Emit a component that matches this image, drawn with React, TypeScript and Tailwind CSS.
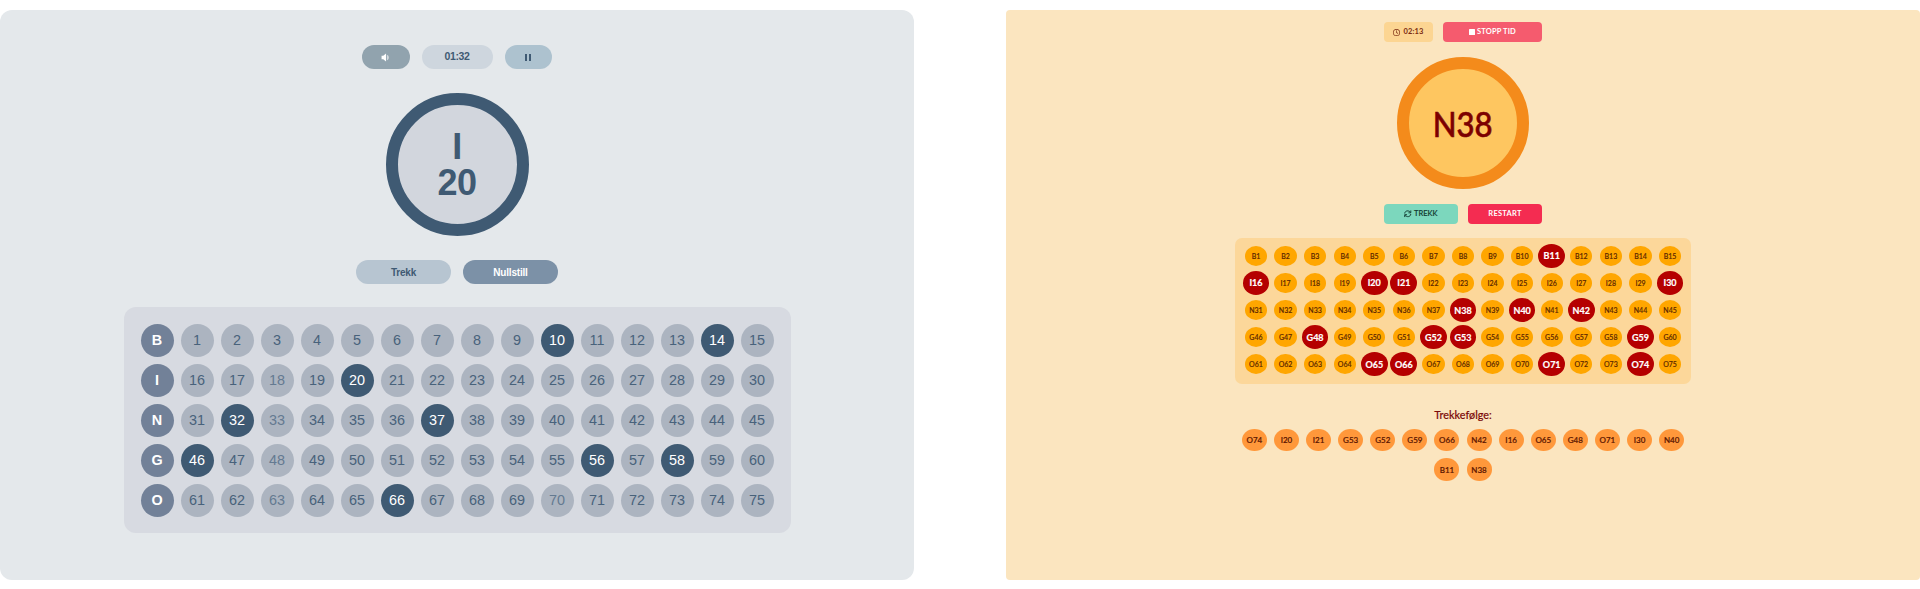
import { FaRegClock } from "react-icons/fa6";

const LETTERS = ["B", "I", "N", "G", "O"];
const COLS = Array.from({ length: 15 }, (_, i) => i);

const SLATE_DRAWN = [10, 14, 20, 32, 37, 46, 56, 58, 66];
const SLATE_FAINT = [18, 33, 48, 63, 70];

const ORDER = ["O74", "I20", "I21", "G53", "G52", "G59", "O66", "N42", "I16", "O65", "G48", "O71", "I30", "N40", "B11", "N38"];

function slateBall(n: number) {
  if (SLATE_DRAWN.includes(n)) return "bg-[#3f5a73] text-white";
  if (SLATE_FAINT.includes(n)) return "bg-[#acb4c0] text-[#647a91]";
  return "bg-[#acb4c0] text-[#48627b]";
}

function SpeakerIcon() {
  return (
    <svg viewBox="0 0 16 16" className="size-[9px]" fill="none">
      <path d="M1 5h3l5-4v14l-5-4H1z" fill="#fff" />
      <path d="M10.500 3c4.500 1.500 4.500 8.500 0 10z" fill="#fff" fillOpacity="0.6" />
    </svg>
  );
}

function RefreshIcon() {
  return (
    <svg viewBox="0 0 16 16" className="size-[7.500px]" fill="none" stroke="currentColor" strokeWidth="2">
      <path d="M1.500 7.500C2 1 10 0 14 5M14.500 8.500C14 15 6 16 2 11" />
      <path d="M14.500 1v5h-5M1.500 15v-5h5" />
    </svg>
  );
}

function SlatePanel() {
  return (
    <section className="flex h-[570px] w-[914px] flex-col items-center rounded-[12px] bg-[#e4e8eb] pt-[35px] font-['Liberation_Sans',sans-serif] text-[#3f5a73]">
      <div className="flex h-6 gap-3 text-[10.500px] font-bold">
        <button className="flex w-[47.500px] items-center justify-center rounded-full bg-[#91a3ae]"><SpeakerIcon /></button>
        <div className="flex w-[71px] items-center justify-center rounded-full bg-[#ced6de] tracking-[-0.400px]">01:32</div>
        <button className="flex w-[47.500px] items-center justify-center gap-[2px] rounded-full bg-[#adc2cf]">
          <span className="h-[7px] w-[2px] bg-[#3f5a73]" />
          <span className="h-[7px] w-[2px] bg-[#3f5a73]" />
        </button>
      </div>
      <div className="mt-[23.500px] flex size-[143px] items-center justify-center rounded-full border-[12px] border-[#3f5a73] bg-[#d2d6dd] text-center text-[36px] leading-[36px] font-bold">
        <p className="pt-px tracking-[-0.500px]">I<br />20</p>
      </div>
      <div className="mt-[24.500px] flex h-6 gap-3 text-[10px] font-bold tracking-[-0.200px]">
        <button className="w-[95px] rounded-full bg-[#b7c5d1]">Trekk</button>
        <button className="w-[95px] rounded-full bg-[#7c91a7] text-white">Nullstill</button>
      </div>
      <div className="mt-[23px] flex w-[667px] flex-col gap-[7px] rounded-[12px] bg-[#d7dae1] p-[17px] pb-4">
        {LETTERS.map((l, r) => (
          <div key={l} className="flex gap-[7px] text-[14.400px]">
            <span className="flex size-[33px] items-center justify-center rounded-full bg-[#728198] font-bold text-white">{l}</span>
            {COLS.map((c) => (
              <span key={c} className={`flex size-[33px] items-center justify-center rounded-full ${slateBall(r * 15 + c + 1)}`}>{r * 15 + c + 1}</span>
            ))}
          </div>
        ))}
      </div>
    </section>
  );
}

function AmberPanel() {
  return (
    <section className="flex h-[570px] w-[914px] flex-col items-center rounded-[4px] bg-[#fbe5bf] pt-3 font-[Lato,sans-serif]">
      <div className="flex h-5 gap-[10px] text-[7.500px] font-bold">
        <div className="flex w-[49px] items-center justify-center gap-[3px] rounded-[4px] bg-[#fcd592] text-[#7a2a10]">
          <FaRegClock className="size-[7px]" />
          <span className="text-[7.500px] tracking-[0.150px]">02:13</span>
        </div>
        <button className="flex w-[99px] items-center justify-center gap-[2px] rounded-[4px] bg-[#f55b6e] text-white">
          <span className="size-[6px] rounded-[0.500px] bg-white" />
          <span className="tracking-[0.150px]">STOPP TID</span>
        </button>
      </div>
      <div className="mt-[14.500px] flex size-[132px] items-center justify-center rounded-full border-[12px] border-[#f48b1b] bg-[#fec660] text-[35px] font-medium text-[#7c0000]">
        <span className="scale-x-[0.890] pt-[2px] [-webkit-text-stroke:0.600px_#7c0000]">N38</span>
      </div>
      <div className="mt-[15.500px] flex h-5 gap-[10px] text-[7.500px]">
        <button className="flex w-[74px] items-center justify-center gap-[2px] rounded-[4px] bg-[#7cd7bd] font-medium text-[#103a30]">
          <RefreshIcon />
          <span className="[-webkit-text-stroke:0.150px_#103a30]">TREKK</span>
        </button>
        <button className="w-[74px] rounded-[4px] bg-[#f42c51] font-bold tracking-[0.250px] text-white">RESTART</button>
      </div>
      <div className="mt-[14px] flex h-[146px] w-[456px] flex-col justify-center rounded-[7px] bg-[#fcd79a] pb-[1.500px]">
        {LETTERS.map((l, r) => (
          <div key={l} className="mx-auto grid h-[27.100px] w-[443.700px] grid-cols-15">
            {COLS.map((c) => {
              const label = l + (r * 15 + c + 1);
              return (
                <div key={c} className="flex items-center justify-center">
                  <span
                    className={
                      ORDER.includes(label)
                        ? "flex h-6 w-[26.700px] shrink-0 items-center justify-center rounded-[50%] bg-[#b50000] text-[9px] font-bold text-white [-webkit-text-stroke:0.200px_#fff]"
                        : "flex h-5 w-[22.300px] items-center justify-center rounded-[50%] bg-[#ffa600] text-[7px] font-medium text-[#5b2600] [-webkit-text-stroke:0.150px_#5b2600]"
                    }
                  >
                    {label}
                  </span>
                </div>
              );
            })}
          </div>
        ))}
      </div>
      <h2 className="mt-6 text-[10.800px] leading-[14px] font-medium text-[#7c0a0a] [-webkit-text-stroke:0.150px_#7c0a0a]">Trekkefølge:</h2>
      <div className="mt-[7px] flex w-[450px] flex-wrap justify-center gap-[7.100px]">
        {ORDER.map((o) => (
          <span key={o} className="flex h-[22.300px] w-[25px] items-center justify-center rounded-[50%] bg-[#ff983b] text-[8px] font-medium text-[#5b1500] [-webkit-text-stroke:0.200px_#5b1500]">{o}</span>
        ))}
      </div>
    </section>
  );
}

export default function App() {
  return (
    <main className="flex h-[589px] w-[1920px] justify-between bg-white pt-[10px]">
      <SlatePanel />
      <AmberPanel />
    </main>
  );
}
